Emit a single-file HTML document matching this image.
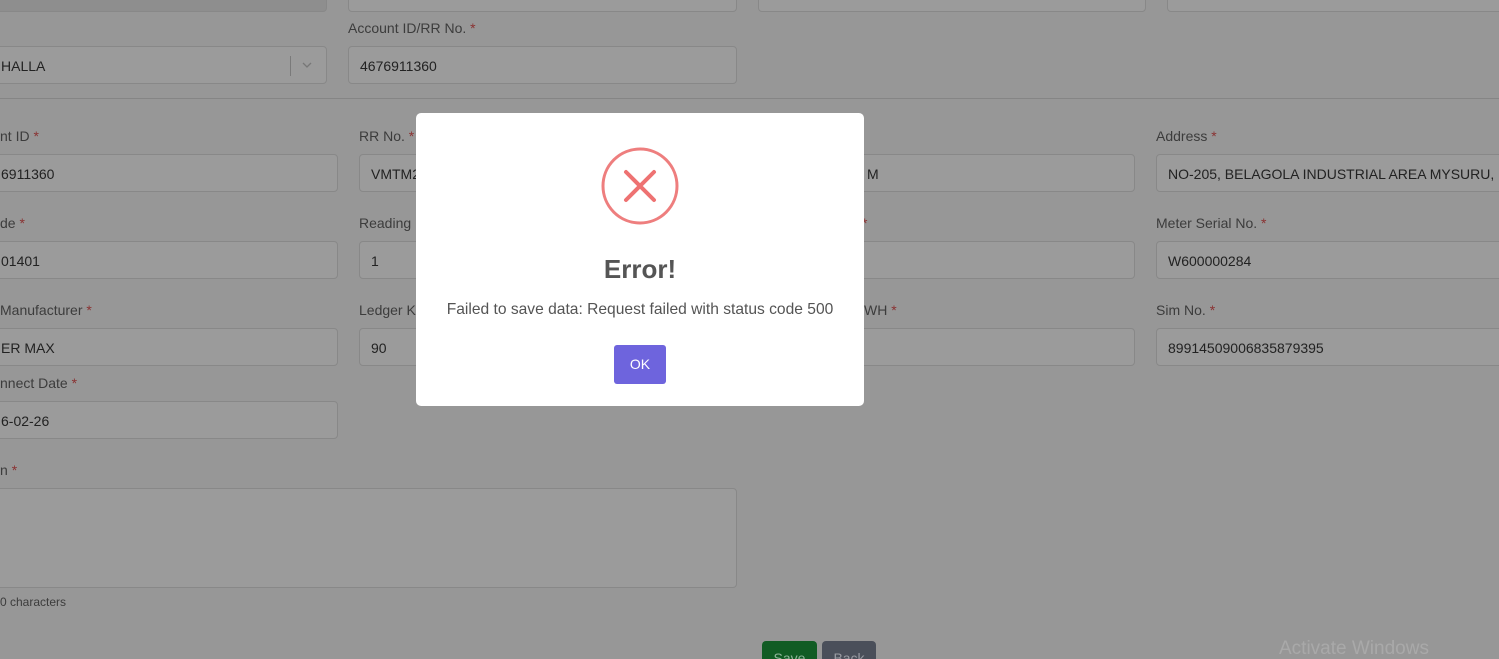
<!DOCTYPE html>
<html style="overflow:hidden;height:659px"><head><style>
body{margin:0;width:1499px;height:659px;overflow:hidden;background:#979797;font-family:"Liberation Sans",sans-serif;position:relative}
.l{position:absolute;font-size:14px;color:#3c3c3c}
.l b{color:#8a3232;font-weight:normal}
.i{position:absolute;height:38px;border:1px solid #888;border-radius:4px;background:#9b9b9b;box-sizing:border-box;font-size:14px;color:#222;line-height:38px;padding-left:11px;white-space:nowrap;overflow:hidden}
</style></head><body>
<div class="i" style="left:-10px;top:-26px;width:337px;background:#8e8e8e"></div>
<div class="i" style="left:348px;top:-26px;width:389px"></div>
<div class="i" style="left:758px;top:-26px;width:388px"></div>
<div class="i" style="left:1167px;top:-26px;width:340px"></div>
<div class="l" style="left:348px;top:20px">Account ID/RR No. <b>*</b></div>
<div class="i" style="left:-10px;top:46px;width:337px;padding-left:10px">HALLA<span style="position:absolute;left:299px;top:9px;height:20px;border-left:1px solid #7a7a7a"></span><svg style="position:absolute;left:311px;top:15px" width="10" height="7" viewBox="0 0 10 7"><path d="M1 1l4 4 4-4" fill="none" stroke="#777" stroke-width="1.3"/></svg></div>
<div class="i" style="left:348px;top:46px;width:389px">4676911360</div>
<div style="position:absolute;left:0;top:98px;width:1499px;border-top:1px solid #858585"></div>

<div class="l" style="left:0;top:128px">nt ID <b>*</b></div>
<div class="i" style="left:-40px;top:154px;width:378px;padding-left:40px">6911360</div>
<div class="l" style="left:359px;top:128px">RR No. <b>*</b></div>
<div class="i" style="left:359px;top:154px;width:378px">VMTM2</div>
<div class="i" style="left:758px;top:154px;width:377px;padding-left:108px">M</div>
<div class="l" style="left:1156px;top:128px">Address <b>*</b></div>
<div class="i" style="left:1156px;top:154px;width:378px">NO-205, BELAGOLA INDUSTRIAL AREA MYSURU,</div>

<div class="l" style="left:0;top:215px">de <b>*</b></div>
<div class="i" style="left:-40px;top:241px;width:378px;padding-left:40px">01401</div>
<div class="l" style="left:359px;top:215px">Reading</div>
<div class="i" style="left:359px;top:241px;width:378px">1</div>
<div class="l" style="left:862px;top:215px"><b>*</b></div>
<div class="i" style="left:758px;top:241px;width:377px"></div>
<div class="l" style="left:1156px;top:215px">Meter Serial No. <b>*</b></div>
<div class="i" style="left:1156px;top:241px;width:378px">W600000284</div>

<div class="l" style="left:0;top:302px">Manufacturer <b>*</b></div>
<div class="i" style="left:-40px;top:328px;width:378px;padding-left:40px">ER MAX</div>
<div class="l" style="left:359px;top:302px">Ledger K</div>
<div class="i" style="left:359px;top:328px;width:378px">90</div>
<div class="l" style="left:864px;top:302px">WH <b>*</b></div>
<div class="i" style="left:758px;top:328px;width:377px"></div>
<div class="l" style="left:1156px;top:302px">Sim No. <b>*</b></div>
<div class="i" style="left:1156px;top:328px;width:378px">89914509006835879395</div>

<div class="l" style="left:0;top:375px">nnect Date <b>*</b></div>
<div class="i" style="left:-40px;top:401px;width:378px;padding-left:40px">6-02-26</div>
<div class="l" style="left:0;top:462px">n <b>*</b></div>
<div class="i" style="left:-40px;top:488px;width:777px;height:100px"></div>
<div class="l" style="left:0;top:595px;font-size:12px">0 characters</div>
<div style="position:absolute;left:762px;top:641px;width:55px;height:30px;background:#115c24;border-radius:4px;color:#8fb59a;font-size:14px;text-align:center;line-height:34px">Save</div>
<div style="position:absolute;left:822px;top:641px;width:54px;height:30px;background:#4a4f5a;border-radius:4px;color:#9a9ca3;font-size:14px;text-align:center;line-height:34px">Back</div>
<div style="position:absolute;left:1279px;top:638px;font-size:19px;color:#a9a9a9">Activate Windows</div>

<div style="position:absolute;left:416px;top:113px;width:448px;height:293px;background:#fff;border-radius:5px">
<svg style="position:absolute;left:185px;top:34px" width="78" height="78" viewBox="0 0 78 78"><circle cx="39" cy="39" r="37" fill="none" stroke="#ee7e7e" stroke-width="3"/><path d="M25 25L53 53M53 25L25 53" stroke="#ee7272" stroke-width="4" stroke-linecap="round"/></svg>
<div style="position:absolute;left:0;top:141px;width:448px;text-align:center;font-size:26px;font-weight:bold;color:#555">Error!</div>
<div style="position:absolute;left:0;top:188px;width:448px;text-align:center;font-size:15.6px;color:#545454">Failed to save data: Request failed with status code 500</div>
<div style="position:absolute;left:198px;top:232px;width:52px;height:39px;background:#6e64dd;border-radius:3px;color:#fff;font-size:14px;text-align:center;line-height:39px">OK</div>
</div>
</body></html>
